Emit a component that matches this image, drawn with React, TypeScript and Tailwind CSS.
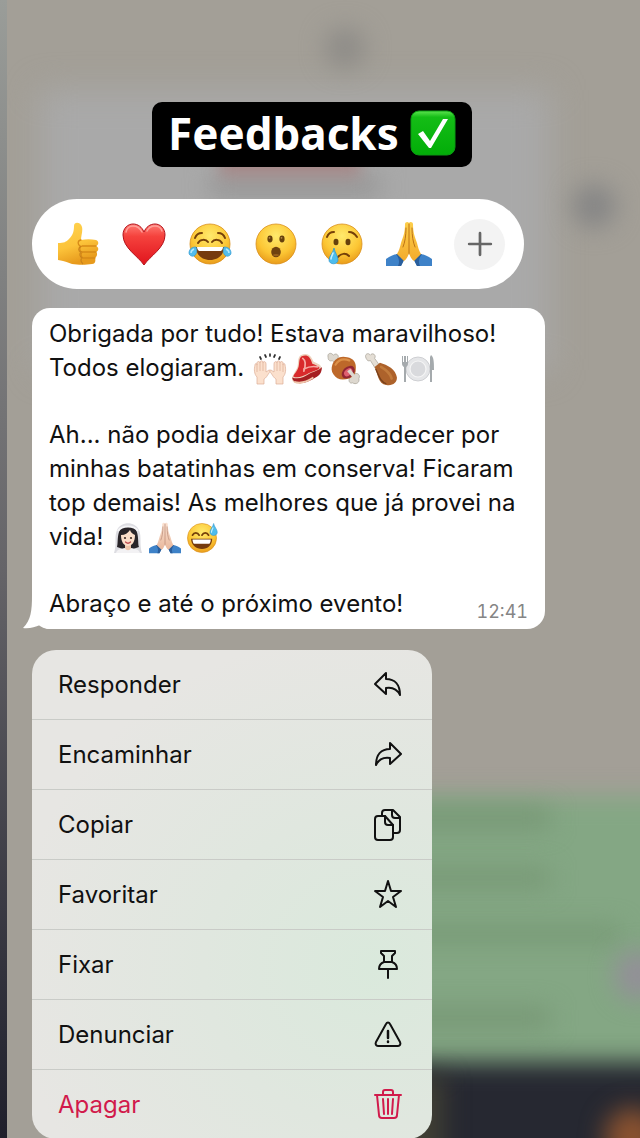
import React from 'react';

type IconProps = { className?: string };

const ThumbsUp: React.FC<IconProps> = ({ className }) => (
  <svg viewBox="0 0 44 44" className={className} aria-hidden="true">
    <defs>
      <linearGradient id="thumb" x1="0" y1="0" x2="0.3" y2="1">
        <stop offset="0" stopColor="#ffd350" />
        <stop offset="0.6" stopColor="#fcc33a" />
        <stop offset="1" stopColor="#e79a1c" />
      </linearGradient>
    </defs>
    <path d="M2 21c6 0 8-1 11-4 4-4 5-8 5-13 0-5 7-4 8 1 1 4-1 9-1 13 5-1 10-1 15 0 3 1 3 5 0 6 3 1 3 5 0 6 2 1 1 5-1 6 1 3 0 6-3 6-6 1-14 1-20 0-4-1-6-3-14-4z" fill="url(#thumb)" />
    <path d="M25 18c-3 0-4 4-1 6M40 24H26c-3 1-3 5 0 6h14M27 30c-3 1-2 5 0 6h12" fill="none" stroke="#d88b17" strokeWidth="1.3" strokeLinecap="round" />
    <path d="M25 24c-3 2-3 5 0 6-2 2-1 5 1 6-2 2-1 4 1 6" fill="none" stroke="#c9811b" strokeWidth="1.1" />
  </svg>
);

const Heart: React.FC<IconProps> = ({ className }) => (
  <svg viewBox="0 0 44 44" className={className} aria-hidden="true">
    <defs>
      <linearGradient id="heart" x1="0" y1="0" x2="0" y2="1">
        <stop offset="0" stopColor="#ff7a72" />
        <stop offset="0.3" stopColor="#f5423d" />
        <stop offset="1" stopColor="#e0141d" />
      </linearGradient>
    </defs>
    <path d="M22 43C16 34 1 26 1 13 1 6 6 2 11 2c5 0 9 3 11 8 2-5 6-8 11-8 5 0 10 4 10 11 0 13-15 21-21 30z" fill="url(#heart)" stroke="#b3121a" strokeWidth="1" />
    <path d="M4 10c1-4 4-6 7-6 4 0 7 2 9 6M25 9c2-4 5-5 8-5 3 0 6 2 7 5" fill="none" stroke="#ff9f98" strokeWidth="1.5" strokeLinecap="round" />
  </svg>
);

const FaceBase = ({ id }: { id: string }) => (
  <>
    <defs>
      <radialGradient id={id} cx="0.5" cy="0.3" r="0.7">
        <stop offset="0" stopColor="#ffea6c" />
        <stop offset="0.65" stopColor="#fcc634" />
        <stop offset="1" stopColor="#e99c1b" />
      </radialGradient>
    </defs>
    <circle cx="22" cy="22" r="20" fill={`url(#${id})`} stroke="#d98f1c" strokeWidth="0.8" />
  </>
);

const Joy: React.FC<IconProps> = ({ className }) => (
  <svg viewBox="0 0 44 44" className={className} aria-hidden="true">
    <FaceBase id="joy" />
    <path d="M7 16c1-3 4-5 7-5M30 11c3 0 6 2 7 5M10 21c2-4 8-4 10-1M24 20c2-3 8-3 10 1" fill="none" stroke="#754009" strokeWidth="2" strokeLinecap="round" />
    <path d="M8 25h28c0 8-6 13-14 13S8 33 8 25z" fill="#753a0d" />
    <path d="M9 25h26c0 2-1 3-2 4H11c-1-1-2-2-2-4z" fill="#fff" />
    <path d="M8 25c-5 0-7 3-7 6s5 5 7 1c1-2 1-4 0-7zM36 25c5 0 7 3 7 6s-5 5-7 1c-1-2-1-4 0-7z" fill="#53bdec" stroke="#329bd2" strokeWidth="0.7" />
    <path d="M6 27c-2 1-3 2-3 4M38 27c2 1 3 2 3 4" fill="none" stroke="#b5e8fb" strokeWidth="1.5" />
  </svg>
);

const OpenMouth: React.FC<IconProps> = ({ className }) => (
  <svg viewBox="0 0 44 44" className={className} aria-hidden="true">
    <FaceBase id="open-mouth" />
    <ellipse cx="16" cy="17" rx="2.6" ry="3.4" fill="#66400c" />
    <ellipse cx="28" cy="17" rx="2.6" ry="3.4" fill="#66400c" />
    <circle cx="15.5" cy="15.8" r="0.9" fill="#b58c4a" />
    <circle cx="27.5" cy="15.8" r="0.9" fill="#b58c4a" />
    <ellipse cx="22" cy="30" rx="4.8" ry="5.2" fill="#70420f" />
    <path d="M18.5 33a4.5 3 0 0 1 7 0 4.5 3.5 0 0 1-7 0z" fill="#98601c" />
  </svg>
);

const Crying: React.FC<IconProps> = ({ className }) => (
  <svg viewBox="0 0 44 44" className={className} aria-hidden="true">
    <FaceBase id="crying" />
    <path d="M7 15c1-3 4-5 7-5M29 10c3 0 6 2 8 5M18 35c3-4 8-4 11-1" fill="none" stroke="#754009" strokeWidth="2" strokeLinecap="round" />
    <ellipse cx="16" cy="20" rx="2.5" ry="3.3" fill="#66400c" />
    <ellipse cx="28" cy="20" rx="2.5" ry="3.3" fill="#66400c" />
    <path d="M14 26c-1 5-5 8-5 12 0 5 9 5 9 0 0-4-3-7-4-12z" fill="#4dbcec" stroke="#2a93cd" strokeWidth="0.7" />
    <path d="M13 31c-1 3-2 4-2 6" fill="none" stroke="#c4effd" strokeWidth="1.6" strokeLinecap="round" />
  </svg>
);

const Pray: React.FC<IconProps & { id: string; from: string; to: string; line: string }> = ({ className, id, from, to, line }) => (
  <svg viewBox="0 0 46 46" className={className} aria-hidden="true">
    <defs>
      <linearGradient id={id} x1="0" y1="0" x2="0" y2="1">
        <stop offset="0" stopColor={from} />
        <stop offset="1" stopColor={to} />
      </linearGradient>
    </defs>
    <path d="M0 45v-7c4-3 8-5 13-5l5 6-3 6zM46 45v-7c-4-3-8-5-13-5l-5 6 3 6z" fill="#3e82c8" />
    <path d="M13 33l5 6-3 6h-3c2-4 1-8-2-12zM33 33l-5 6 3 6h3c-2-4-1-8 2-12z" fill="#2a5e9c" />
    <path d="M23 2c-1-2-4-1-4 1 0 9-2 13-4 19-1 4-2 8-4 11l7 7c3-2 4-5 5-8 1 3 2 6 5 8l7-7c-2-3-3-7-4-11-2-6-4-10-4-19 0-2-3-3-4-1z" fill={`url(#${id})`} />
    <path d="M23 3v30M20 7c0 8-1 14-3 19M26 7c0 8 1 14 3 19" fill="none" stroke={line} strokeWidth="1" strokeLinecap="round" />
  </svg>
);

const Plus: React.FC<IconProps> = ({ className }) => (
  <svg viewBox="0 0 24 24" className={className} fill="none" stroke="currentColor" strokeWidth="2.5" strokeLinecap="round" aria-hidden="true">
    <path d="M12 2v20M2 12h20" />
  </svg>
);

const CheckMark: React.FC<IconProps> = ({ className }) => (
  <svg viewBox="0 0 46 46" className={className} aria-hidden="true">
    <defs>
      <linearGradient id="check" x1="0" y1="0" x2="0" y2="1">
        <stop offset="0" stopColor="#5ce34f" />
        <stop offset="0.14" stopColor="#14bd16" />
        <stop offset="1" stopColor="#02ad08" />
      </linearGradient>
    </defs>
    <rect x="1" y="1" width="44" height="44" rx="8" fill="url(#check)" stroke="#0b9a13" />
    <path d="M8 24l5-3 7 10L33 9h5L21 38h-2z" fill="#fff" />
  </svg>
);

const RaisedHands: React.FC<IconProps> = ({ className }) => (
  <svg viewBox="0 0 34 32" className={className} aria-hidden="true">
    <path d="M7 4l1 2M12 2l1 2M17 1v2M22 2l-1 2M27 4l-1 2" stroke="#303030" strokeWidth="1.7" strokeLinecap="round" />
    <g fill="#fbe0cd" stroke="#dcae96" strokeWidth="0.7">
      <path d="M4 31v-7c-3-3-3-8-2-12 0-2 2-2 2 0v-2c0-2 3-2 3 0 0-3 3-3 3 0 0-2 3-2 3 1v8l3-2c2 0 1 2 0 3-2 3-3 5-5 6v5z" />
      <path d="M30 31v-7c3-3 3-8 2-12 0-2-2-2-2 0v-2c0-2-3-2-3 0 0-3-3-3-3 0 0-2-3-2-3 1v8l-3-2c-2 0-1 2 0 3 2 3 3 5 5 6v5z" />
      <path d="M4 12v7M7 10v8M10 10v8M30 12v7M27 10v8M24 10v8" fill="none" />
    </g>
  </svg>
);

const Steak: React.FC<IconProps> = ({ className }) => (
  <svg viewBox="0 0 32 32" className={className} aria-hidden="true">
    <path d="M10 3c6-3 10 0 12 6l6 3c3 3 1 8-3 11l-8 4C11 31 3 31 2 26c-1-3 3-7 5-12 1-4 0-9 3-11z" fill="#eed2bd" />
    <path d="M2 24c6 2 11 0 17-4 4-2 9-3 11-6 0 5-2 8-6 10-7 5-20 9-22 0z" fill="#a61f22" />
    <path d="M11 4c5-2 8 0 10 7 3 1 5 2 7 4-3 3-8 3-12 6-4 2-9 4-13 2 1-3 4-5 5-9 1-3 0-8 3-10z" fill="#d92a2c" />
    <path d="M12 6c3 2 3 6 1 12M13 16c4-2 8-3 13-2" fill="none" stroke="#f5aaa3" strokeWidth="1.6" strokeLinecap="round" />
    <path d="M4 28c6 2 12 0 18-4" fill="none" stroke="#f0c7ad" strokeWidth="1.6" />
  </svg>
);

const MeatOnBone: React.FC<IconProps> = ({ className }) => (
  <svg viewBox="0 0 32 32" className={className} aria-hidden="true">
    <path d="M1 5c-1-4 3-5 5-2 3-3 6 1 4 3l15 15c3-2 7 0 5 4 1 4-3 6-6 4-2 1-4-1-3-4L5 8C3 9 1 8 1 5z" fill="#ddd8cf" stroke="#aaa49a" strokeWidth="0.7" />
    <path d="M5 12c2-6 8-9 14-7 6 1 9 5 8 12 0 4-2 6-6 8-7 2-12 1-15-4-2-3-2-6-1-9z" fill="#bd682a" />
    <path d="M8 12c3-5 8-6 13-4" fill="none" stroke="#dc9149" strokeWidth="2" strokeLinecap="round" />
    <ellipse cx="20" cy="19" rx="7" ry="5" fill="#922634" transform="rotate(-42 20 19)" />
    <ellipse cx="20" cy="19" rx="4.5" ry="3" fill="#df6070" transform="rotate(-42 20 19)" />
    <path d="M19 18l7 8 2-2-6-8z" fill="#ddd8cf" />
  </svg>
);

const PoultryLeg: React.FC<IconProps> = ({ className }) => (
  <svg viewBox="0 0 32 32" className={className} aria-hidden="true">
    <path d="M2 6C0 2 4 0 6 3c2-3 6 0 4 3l5 7-4 3-5-8C4 9 3 8 2 6z" fill="#e4ded5" stroke="#aaa49a" strokeWidth="0.7" />
    <path d="M10 14l5-4c7 2 15 6 16 14 0 5-4 8-10 7C13 30 13 20 10 14z" fill="#ad622b" />
    <path d="M16 14c5 3 9 6 10 11" fill="none" stroke="#c27b3c" strokeWidth="2.5" strokeLinecap="round" />
    <path d="M11 16c3 6 4 12 10 14" fill="none" stroke="#78401b" strokeWidth="1.3" />
  </svg>
);

const PlateCutlery: React.FC<IconProps> = ({ className }) => (
  <svg viewBox="0 0 34 32" className={className} aria-hidden="true">
    <circle cx="17" cy="16" r="12" fill="#e5e6e8" stroke="#c5c7ca" strokeWidth="0.8" />
    <circle cx="17" cy="16" r="8" fill="#d9dadd" stroke="#f5f5f5" strokeWidth="1.2" />
    <path d="M1 3v7c0 3 1 3 2 4v15h2V14c1-1 2-1 2-4V3H6v6H5V3H3v6H2V3z" fill="#a5aaad" />
    <path d="M30 2c3 2 3 8 3 15h-2v12h-2V4z" fill="#a5aaad" />
  </svg>
);

const Bride: React.FC<IconProps> = ({ className }) => (
  <svg viewBox="0 0 32 32" className={className} aria-hidden="true">
    <path d="M2 31C5 22 2 15 5 8 9-1 23-1 27 8c3 7 0 14 3 23z" fill="#dddde2" />
    <path d="M5 25C7 20 3 4 16 4s9 16 11 21l-6 2H11z" fill="#292529" />
    <path d="M4 31c1-4 5-4 9-5h6c4 1 8 1 9 5z" fill="#f3f2f4" />
    <path d="M13 21h6v5c-1 3-5 3-6 0z" fill="#eec6ab" />
    <path d="M9 13c4 0 7-2 9-5 1 3 3 4 5 5 0 7-3 11-7 11S9 20 9 13z" fill="#fbdfca" />
    <path d="M6 9C10 3 22 3 26 9" fill="none" stroke="#f5f5f7" strokeWidth="2" />
    <circle cx="13" cy="16" r="1.1" fill="#3e2b24" />
    <circle cx="19" cy="16" r="1.1" fill="#3e2b24" />
    <path d="M13.5 20c2 2 4 1 5 0" fill="none" stroke="#be4d50" strokeWidth="1.3" strokeLinecap="round" />
  </svg>
);

const SweatSmile: React.FC<IconProps> = ({ className }) => (
  <svg viewBox="0 0 44 44" className={className} aria-hidden="true">
    <FaceBase id="sweat" />
    <path d="M9 18c2-4 7-4 9 0M22 18c2-4 7-4 9 0" fill="none" stroke="#754009" strokeWidth="2.5" strokeLinecap="round" />
    <path d="M7 23h29c0 9-6 14-14 14S7 32 7 23z" fill="#753a0d" />
    <path d="M9 24h25c0 3-1 5-2 6H11c-1-1-2-3-2-6z" fill="#fff" />
    <path d="M38 2c-1 5-5 8-5 12 0 6 10 6 10 0 0-4-4-7-5-12z" fill="#4dbcec" stroke="#2a93cd" strokeWidth="0.7" />
    <path d="M37 8c-1 3-2 4-2 6" fill="none" stroke="#c4effd" strokeWidth="1.6" strokeLinecap="round" />
  </svg>
);

const icons = {
  reply: <path d="M13 4 2 15l11 10v-6c6-1 11 1 14 7 0-10-5-16-14-16z" />,
  forward: <path d="M17 4l11 11-11 10v-6C11 18 6 20 3 26 3 16 8 10 17 10z" />,
  copy: (
    <>
      <path d="M9 7V4c0-2 1-3 3-3h8l7 7v13c0 2-1 3-3 3h-4" />
      <path d="M19 1v5c0 2 1 3 3 3h5" />
      <path d="M5 7h7l8 9v12c0 2-1 3-3 3H5c-2 0-3-1-3-3V10c0-2 1-3 3-3z" />
      <path d="M12 7v6c0 2 1 3 3 3h5" />
    </>
  ),
  star: <path d="M15 2l3 10 10 0-8 6 3 10-8-6-8 6 3-10-8-6 10 0z" />,
  pin: <path d="M8 2h14v2l-3 3v6c3 1 5 3 5 7H6c0-4 2-6 5-7V7L8 4zM11 13h8M15 20v9" />,
  report: (
    <>
      <path d="M13 5c1-2 3-2 4 0l10 18c1 2 0 4-2 4H5c-2 0-3-2-2-4z" />
      <path d="M15 12v7M15 22.500v0.500" strokeWidth="2.500" />
    </>
  ),
  trash: (
    <>
      <path d="M2 6h26M10 6V3c0-1 1-2 2-2h6c1 0 2 1 2 2v3M4 6l2 20c0 2 1 3 3 3h12c2 0 3-1 3-3l2-20" />
      <path d="M10 10l1 15M15 10v15M20 10l-1 15" />
    </>
  ),
};

interface MenuItem {
  label: string;
  icon: keyof typeof icons;
  danger?: boolean;
}

const menuItems: MenuItem[] = [
  { label: 'Responder', icon: 'reply' },
  { label: 'Encaminhar', icon: 'forward' },
  { label: 'Copiar', icon: 'copy' },
  { label: 'Favoritar', icon: 'star' },
  { label: 'Fixar', icon: 'pin' },
  { label: 'Denunciar', icon: 'report' },
  { label: 'Apagar', icon: 'trash', danger: true },
];

const reactions = [
  { label: 'Curtir', icon: <ThumbsUp className="size-11" /> },
  { label: 'Amei', icon: <Heart className="size-11" /> },
  { label: 'Risada', icon: <Joy className="size-11" /> },
  { label: 'Surpresa', icon: <OpenMouth className="size-11" /> },
  { label: 'Triste', icon: <Crying className="size-11" /> },
  { label: 'Gratidão', icon: <Pray id="pray" from="#fdcf4b" to="#f3ab2c" line="#bd7417" className="size-[46px]" /> },
];

// Blurred chat behind the open context menu
const Backdrop = () => (
  <div className="absolute inset-0 overflow-hidden" aria-hidden="true">
    <div className="absolute top-[90px] left-10 right-[90px] h-[280px] bg-[#a9a9a9] blur-lg" />
    <div className="absolute top-7 left-[325px] size-10 rounded-full bg-[#8d8b87] blur-md" />
    <div className="absolute top-[176px] left-[210px] h-5 w-[170px] bg-[#959595] blur-md" />
    <div className="absolute top-[148px] left-[220px] h-7 w-[140px] bg-[#a58787] blur-sm" />
    <div className="absolute top-[184px] right-6 size-11 rounded-full bg-[#858585] blur-md" />
    <div className="absolute top-[796px] left-[180px] -right-10 h-[300px] bg-[#84a784] blur-md" />
    <div className="absolute top-[808px] left-[400px] h-5 w-[150px] bg-[#769674] blur-md" />
    <div className="absolute top-[868px] left-[400px] h-5 w-[150px] bg-[#779875] blur-md" />
    <div className="absolute top-[926px] left-[400px] h-4 w-[220px] bg-[#759773] blur-md" />
    <div className="absolute top-[1008px] left-[400px] h-5 w-[150px] bg-[#769674] blur-md" />
    <div className="absolute top-[950px] -right-5 h-[50px] w-[45px] rounded-full bg-[#938f98] blur-md" />
    <div className="absolute top-[1062px] left-[180px] -right-10 h-[120px] bg-[#262831] blur-md" />
    <div className="absolute top-[1076px] left-[390px] h-[90px] w-[54px] bg-[#403f34] blur-md" />
    <div className="absolute top-[1108px] -right-5 h-[60px] w-[55px] rounded-full bg-[#8a5230] blur-md" />
    <div className="absolute inset-y-0 left-0 w-[7px] bg-linear-to-b from-[#9a9d99] via-[#656468] to-[#1f1f2b]" />
  </div>
);

export default function App() {
  return (
    <main className="relative min-h-screen overflow-hidden bg-[#a39f97] font-['Inter','Liberation_Sans',sans-serif] text-[#111]">
      <Backdrop />
      <div className="relative flex flex-col items-start pt-[102px] pl-8">
        <h1 className="ml-[120px] flex h-[65px] items-center gap-[11px] rounded-[10px] bg-black px-4 pb-1 font-['Noto_Sans','Open_Sans',sans-serif] text-[44px] leading-none font-bold text-white">
          Feedbacks
          <CheckMark className="size-[46px]" />
        </h1>

        <div className="mt-8 flex h-[90px] w-[492px] max-w-full items-center justify-between rounded-full bg-white pr-[19px] pl-6">
          {reactions.map(({ label, icon }) => (
            <button key={label} type="button" aria-label={label}>
              {icon}
            </button>
          ))}
          <button type="button" aria-label="Mais reações" className="flex size-[51px] items-center justify-center rounded-full bg-[#f3f3f3] text-[#666]">
            <Plus className="size-[26px]" />
          </button>
        </div>

        <article className="relative mt-[19px] w-[513px] max-w-full rounded-[18px] bg-white px-[17px] pt-[9px] pb-2 text-[24px] leading-[34px]">
          <svg viewBox="0 0 30 34" className="absolute bottom-0 -left-[9px] h-[34px] w-[30px]" fill="#fff" aria-hidden="true">
            <path d="M9 0c0 16-1 25-9 33 6 1 12-1 17-3 3 2 6 4 10 4h3V0z" />
          </svg>
          <div className="relative flex flex-col gap-[33px]">
            <p>
              Obrigada por tudo! Estava maravilhoso!
              <br />
              Todos elogiaram.{' '}
              <span className="-my-1 ml-[2px] inline-flex gap-[3px] align-middle" role="img" aria-label="Mãos levantadas, carnes e prato">
                <RaisedHands className="size-[34px]" />
                <Steak className="size-[34px]" />
                <MeatOnBone className="size-[34px]" />
                <PoultryLeg className="size-[34px]" />
                <PlateCutlery className="size-[34px]" />
              </span>
            </p>
            <p>
              Ah... não podia deixar de agradecer por
              <br />
              minhas batatinhas em conserva! Ficaram
              <br />
              top demais! As melhores que já provei na
              <br />
              vida!{' '}
              <span className="-my-1 ml-[2px] inline-flex gap-[5px] align-middle" role="img" aria-label="Noiva, mãos unidas e sorriso com gota">
                <Bride className="size-8" />
                <Pray id="pray-light" from="#fbe3d3" to="#e9b79b" line="#b98975" className="size-8" />
                <SweatSmile className="size-8" />
              </span>
            </p>
            <div className="flex justify-between">
              <p>Abraço e até o próximo evento!</p>
              <time className="self-end text-[18px] leading-[18px] text-[#858585] tabular-nums">12:41</time>
            </div>
          </div>
        </article>

        <ul className="mt-[21px] w-[400px] max-w-full divide-y divide-[#c9cbc7] overflow-hidden rounded-[24px] bg-[#e7e6e3] bg-[radial-gradient(ellipse_at_85%_65%,#dae9dc_0%,#e0e7df_35%,#e7e6e3_75%)]">
          {menuItems.map(({ label, icon, danger }) => (
            <li key={label}>
              <button
                type="button"
                className={`flex h-[69px] w-full items-center justify-between pr-[29px] pl-[26px] text-[24px] ${danger ? 'text-[#d11a4b]' : ''}`}
              >
                {label}
                <svg viewBox="0 0 30 32" className="h-8 w-[30px]" fill="none" stroke="currentColor" strokeWidth="2" strokeLinecap="round" strokeLinejoin="round" aria-hidden="true">
                  {icons[icon]}
                </svg>
              </button>
            </li>
          ))}
        </ul>
      </div>
    </main>
  );
}
